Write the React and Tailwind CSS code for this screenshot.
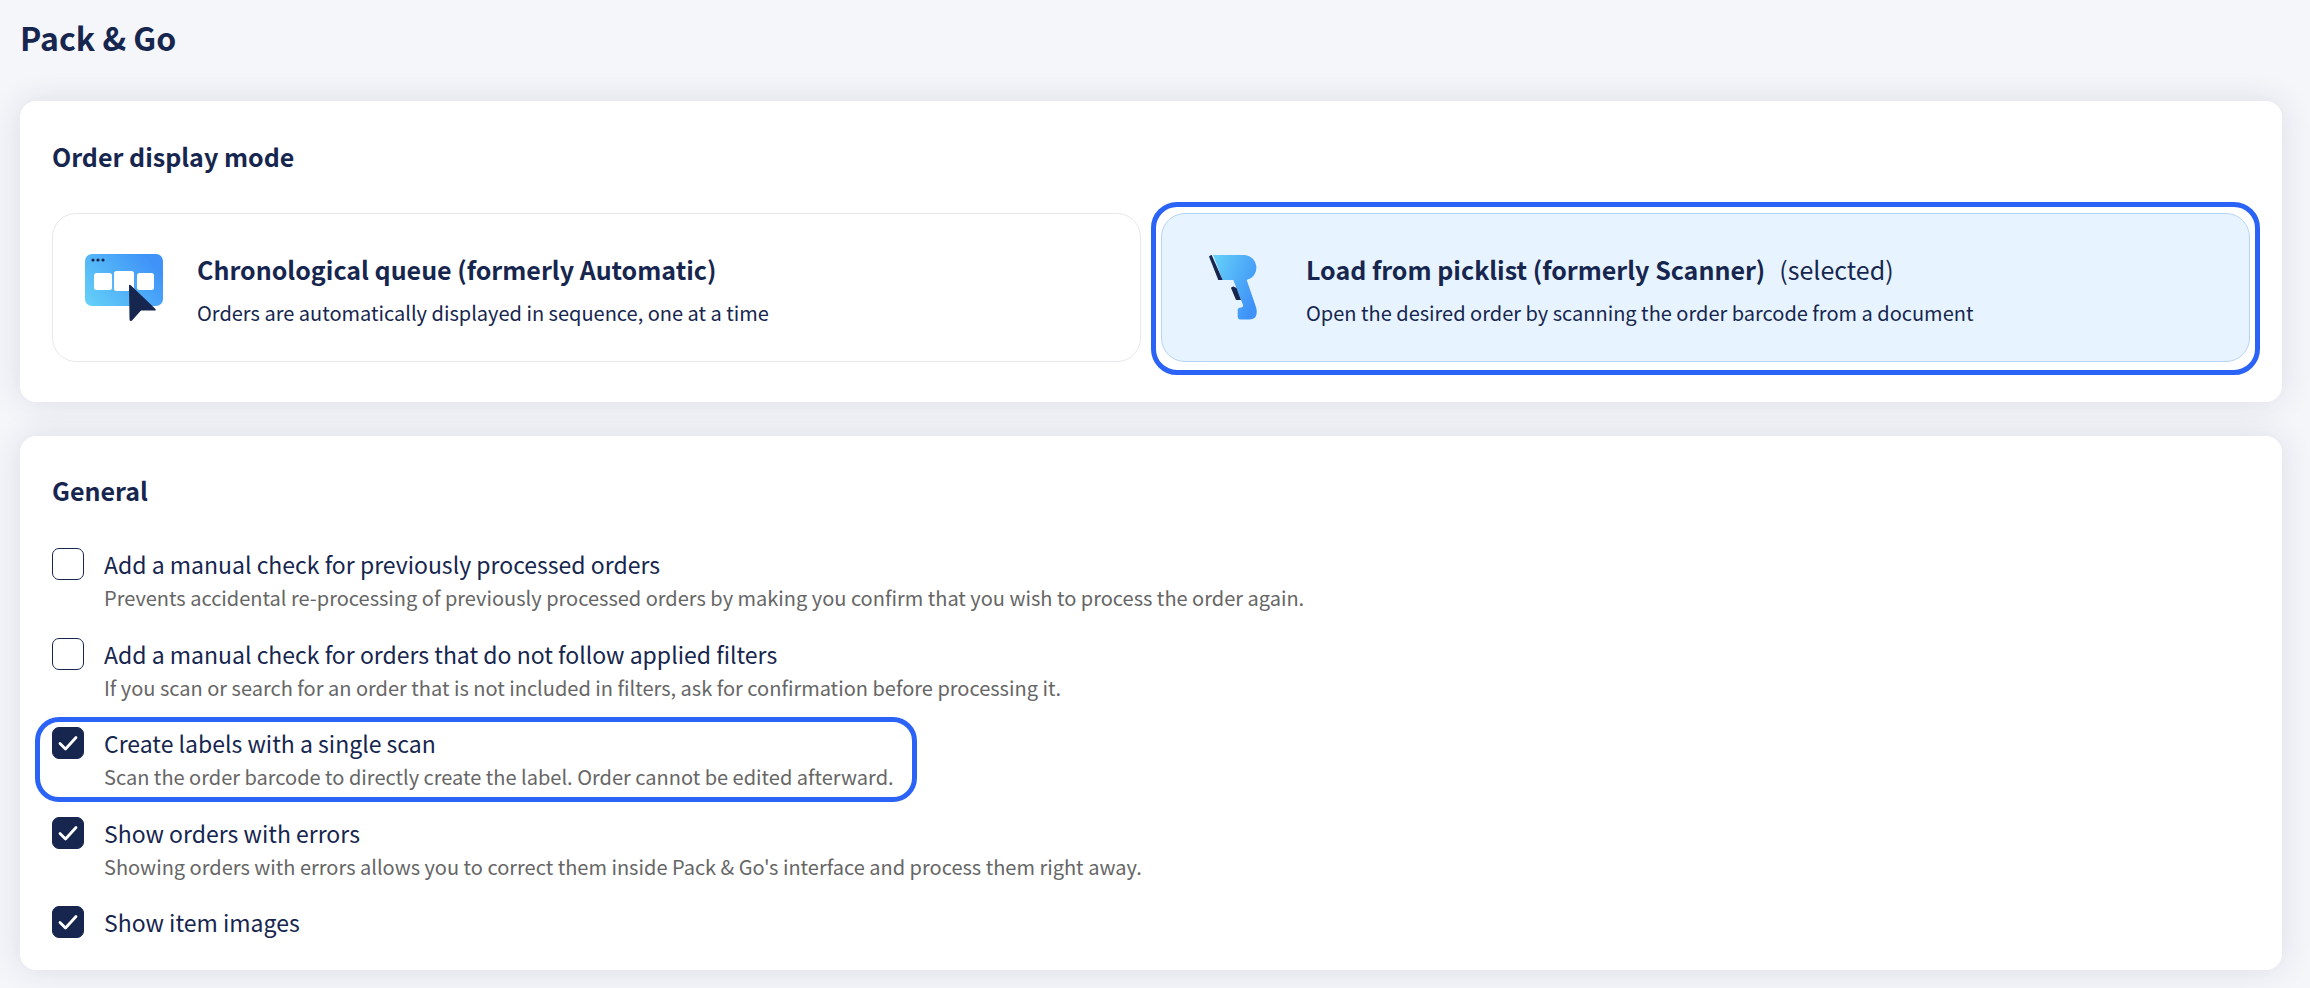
import React from "react";

const FONT = "font-['Noto_Sans_CJK_SC','Noto_Sans',sans-serif]";

function WindowIcon() {
  return (
    <svg width="80" height="68" viewBox="0 0 80 68" className="shrink-0">
      <defs>
        <linearGradient id="g1" x1="0" y1="1" x2="1" y2="0.4">
          <stop offset="0" stopColor="#66d2f8" />
          <stop offset="1" stopColor="#3f93f8" />
        </linearGradient>
      </defs>
      <rect x="0" y="0" width="78" height="52" rx="7" fill="url(#g1)" />
      <circle cx="8" cy="6" r="1.6" fill="#16264f" />
      <circle cx="13" cy="6" r="1.6" fill="#16264f" />
      <circle cx="18" cy="6" r="1.6" fill="#16264f" />
      <rect x="9" y="19" width="18" height="17" rx="2.5" fill="#fff" />
      <rect x="29" y="17" width="20" height="20" rx="2.5" fill="#fff" />
      <rect x="52" y="19" width="17" height="17" rx="2.5" fill="#fff" />
      <path d="M44 32 Q44 30 46 31.5 L70.5 55 Q71.5 56.5 69.5 56.5 L56 56.5 L47 66.5 Q44.5 68 44.5 65 Z" fill="#16264f" />
    </svg>
  );
}

function ScannerIcon() {
  return (
    <svg width="80" height="66" viewBox="0 0 80 66" className="shrink-0">
      <defs>
        <linearGradient id="g2" x1="0" y1="0" x2="1" y2="0.6">
          <stop offset="0" stopColor="#66d2f8" />
          <stop offset="1" stopColor="#3f93f8" />
        </linearGradient>
      </defs>
      <path d="M19 0 L51 0 A12.7 12.7 0 0 1 52.7 25 L62.3 53 Q64.5 64.5 55 64.5 L46.5 64.5 Q43.7 64.5 43.7 61.5 L43.7 55 Q43.7 52.7 47 52.5 Q49.5 52 49 50 L39.3 25 L28.7 25 Z" fill="url(#g2)" />
      <path d="M15 1.5 Q16 0 17.7 0 L28.7 25 L24.3 25 Z" fill="#16264f" />
      <path d="M37 33 Q37.5 31.5 39.5 31.5 L42.5 33 L47 45 L42 45 Z" fill="#16264f" />
    </svg>
  );
}

function Check({ on }) {
  return (
    <span
      className={
        "flex h-8 w-8 shrink-0 items-center justify-center rounded-[7px] border " +
        (on ? "border-[#16264f] bg-[#16264f]" : "border-[#16264f] bg-white")
      }
    >
      {on && (
        <svg width="20" height="16" viewBox="0 0 20 16" fill="none">
          <path d="M2 8.5 L7.5 14 L18 2.5" stroke="#fff" strokeWidth="2.8" strokeLinecap="round" strokeLinejoin="round" />
        </svg>
      )}
    </span>
  );
}

function Row({ on, label, desc, ring }) {
  return (
    <div className="relative flex h-[89.5px] gap-5">
      <Check on={on} />
      <div>
        <div className="-mt-[1px] text-[23px] leading-[34px] text-[#16264f]">{label}</div>
        {desc && <div className="text-[20px] leading-[34px] text-[#666666]">{desc}</div>}
      </div>
      {ring && (
        <div className="absolute left-[-17px] top-[-10px] h-[85px] w-[882px] rounded-[24px] border-[5px] border-[#2b63f6]" />
      )}
    </div>
  );
}

function Mode({ icon, title, extra, desc, selected }) {
  return (
    <div
      className={
        "relative flex h-[149px] items-center gap-[33px] rounded-[24px] border pl-[32px] " +
        (selected ? "border-[#b6d4f7] bg-[#e7f4ff]" : "border-[#e8e8ec] bg-white")
      }
    >
      {icon}
      <div className="-ml-[1px] pt-[3px]">
        <div className="flex gap-[14px] text-[25px] leading-[38px] text-[#16264f]">
          <span className="font-bold">{title}</span>
          {extra && <span className="text-[25px]">{extra}</span>}
        </div>
        <div className="mt-[9px] text-[20px] leading-[32px] text-[#16264f]">{desc}</div>
      </div>
      {selected && (
        <div className="absolute bottom-[-14px] left-[-11px] right-[-11px] top-[-12px] rounded-[26px] border-[5px] border-[#2b63f6]" />
      )}
    </div>
  );
}

export default function App() {
  return (
    <div className={"min-h-[988px] bg-[#f5f6fa] pl-5 pr-[28px] " + FONT}>
      <h1 className="pb-[44px] pt-[17px] text-[32px] font-bold leading-[40px] text-[#16264f]">Pack &amp; Go</h1>
      <section className="rounded-[16px] bg-white px-8 pb-10 pt-[39px] shadow-[0_0_32px_rgba(22,38,79,0.12)]">
        <h2 className="text-[25px] font-bold leading-[32px] text-[#16264f]">Order display mode</h2>
        <div className="mt-[41px] grid grid-cols-2 gap-5">
          <Mode
            icon={<WindowIcon />}
            title="Chronological queue (formerly Automatic)"
            desc="Orders are automatically displayed in sequence, one at a time"
          />
          <Mode
            selected
            icon={<ScannerIcon />}
            title="Load from picklist (formerly Scanner)"
            extra="(selected)"
            desc="Open the desired order by scanning the order barcode from a document"
          />
        </div>
      </section>
      <section className="mt-[34px] rounded-[16px] bg-white px-8 pb-8 pt-[38px] shadow-[0_0_32px_rgba(22,38,79,0.12)]">
        <h2 className="text-[25px] font-bold leading-[32px] text-[#16264f]">General</h2>
        <div className="mt-[42px]">
          <Row
            label="Add a manual check for previously processed orders"
            desc="Prevents accidental re-processing of previously processed orders by making you confirm that you wish to process the order again."
          />
          <Row
            label="Add a manual check for orders that do not follow applied filters"
            desc="If you scan or search for an order that is not included in filters, ask for confirmation before processing it."
          />
          <Row
            on
            ring
            label="Create labels with a single scan"
            desc="Scan the order barcode to directly create the label. Order cannot be edited afterward."
          />
          <Row
            on
            label="Show orders with errors"
            desc="Showing orders with errors allows you to correct them inside Pack & Go's interface and process them right away."
          />
          <div className="relative flex h-8 gap-5">
            <Check on />
            <div className="-mt-[1px] text-[23px] leading-[34px] text-[#16264f]">Show item images</div>
          </div>
        </div>
      </section>
    </div>
  );
}
